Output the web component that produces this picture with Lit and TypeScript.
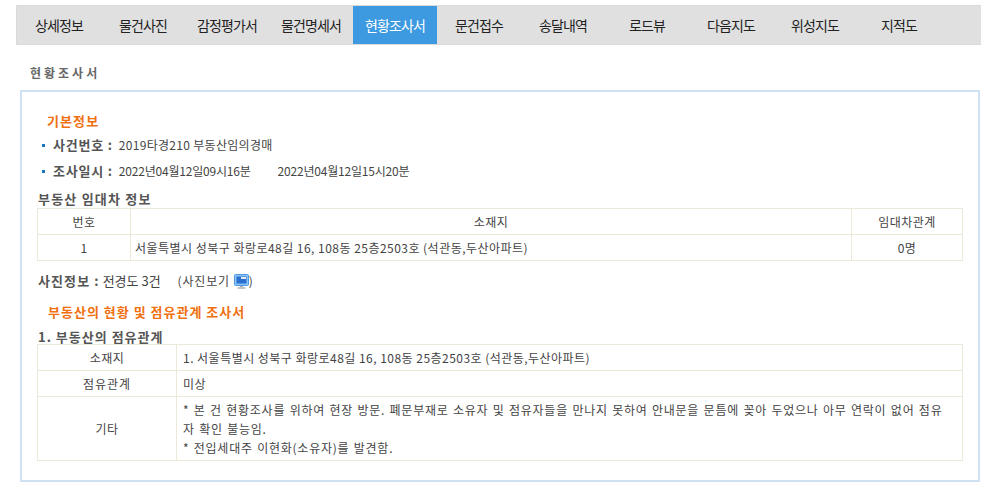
import { LitElement, html, css } from "lit";
import { customElement } from "lit/decorators.js";

const TABS = ["상세정보","물건사진","감정평가서","물건명세서","현황조사서","문건접수","송달내역","로드뷰","다음지도","위성지도","지적도"];
const ADDR = "서울특별시 성북구 화랑로48길 16, 108동 25층2503호 (석관동,두산아파트)";

@customElement("app-root")
export class AppRoot extends LitElement {
  static styles = css`
    :host { display: block; width: 981px; height: 491px; overflow: hidden; background: #fff; color: #333;
      font-family: "Noto Sans CJK KR", "Noto Sans", sans-serif; font-size: 12px; }
    * { box-sizing: border-box; }
    .page { padding: 5px 0 0 16px; }
    .nav { display: flex; height: 40px; background: #e0e0e0; border: 1px solid #dadada; border-right: 0; }
    .tab { width: 84px; height: 38px; display: flex; align-items: center; justify-content: center; font-size: 14px; letter-spacing: -0.9px; color: #222; }
    .tab.on { background: #3d9ae0; color: #fff; }
    .title { margin: 19px 0 0 14px; height: 17px; line-height: 17px; font-size: 12px; font-weight: 700; color: #666; letter-spacing: 3px; }
    .box { margin: 9px 1px 0 4px; height: 392px; border: 2px solid #cfe0f3; padding: 20px 15px 0 15px; }
    .h-or { color: #f07010; font-weight: 700; font-size: 13px; line-height: 18px; height: 18px; }
    .h1 { margin-left: 10px; letter-spacing: 1.1px; }
    .info { display: flex; align-items: center; height: 26px; color: #444; font-size: 12px; letter-spacing: -0.2px; margin-left: 5px; }
    .info1 { margin-top: 1px; letter-spacing: 0.3px; }
    .bul { width: 3px; height: 3px; background: #1a76c0; margin-right: 8px; margin-top: 2px; }
    .info b { color: #555; font-size: 13px; letter-spacing: 0.8px; margin-right: 6px; }
    .gap { margin-left: 27px; }
    .sub { color: #555; font-weight: 700; font-size: 13px; line-height: 14px; height: 14px; margin-left: 1px; }
    .s1 { margin-top: 9px; margin-bottom: 2px; letter-spacing: 1.2px; }
    table { border-collapse: collapse; table-layout: fixed; width: 925px; color: #444; font-size: 12px; letter-spacing: 0.47px; }
    td { border: 1px solid #ece9d8; text-align: center; height: 26px; padding: 0 5px; line-height: 25px; }
    td.l { text-align: left; padding-left: 4px; }
    td.m { padding-left: 6px; padding-right: 12px; }
    td.long { line-height: 19px; padding-top: 3px; padding-bottom: 3px; word-spacing: 1px; letter-spacing: 0.75px; }
    .wide { letter-spacing: 1px; }
    .photo { display: flex; align-items: center; height: 22px; margin-top: 8px; color: #444; font-size: 13px; }
    .photo b { color: #555; letter-spacing: 1.1px; margin-right: 3px; margin-left: 1px; }
    .ph2 { margin-left: 17px; font-size: 12px; display: flex; align-items: center; letter-spacing: 0.8px; }
    svg { display: block; margin: 2px 0 0 4px; }
    .h2 { margin: 12px 0 0 11px; letter-spacing: 1px; }
    .s2 { margin-top: 9px; letter-spacing: 1px; }
  `;
  render() {
    return html`<div class="page">
      <div class="nav">${TABS.map((t, i) => html`<div class="tab ${i === 4 ? "on" : ""}">${t}</div>`)}</div>
      <div class="title">현황조사서</div>
      <div class="box">
        <div class="h-or h1">기본정보</div>
        <div class="info info1"><span class="bul"></span><b>사건번호 :</b>2019타경210 부동산임의경매</div>
        <div class="info"><span class="bul"></span><b>조사일시 :</b>2022년04월12일09시16분<span class="gap">2022년04월12일15시20분</span></div>
        <div class="sub s1">부동산 임대차 정보</div>
        <table>
          <colgroup><col style="width:93px"><col style="width:721px"><col style="width:111px"></colgroup>
          <tr><td>번호</td><td>소재지</td><td>임대차관계</td></tr>
          <tr><td>1</td><td class="l">${ADDR}</td><td>0명</td></tr>
        </table>
        <div class="photo"><b>사진정보 :</b>전경도 3건<span class="ph2">(사진보기<svg width="15" height="15" viewBox="0 0 15 15"><rect x="0.5" y="0.5" width="14" height="11" rx="1" fill="#8cc2f4" stroke="#4f9ae6"/><rect x="2.5" y="2.5" width="10" height="7" fill="#2a6fd0"/><rect x="7" y="3" width="5" height="2" fill="#e4edf8"/><rect x="6" y="12" width="3" height="1" fill="#a8adb2"/><rect x="3.5" y="13" width="8" height="2" fill="#c2c5c9"/></svg>)</span></div>
        <div class="h-or h2">부동산의 현황 및 점유관계 조사서</div>
        <div class="sub s2">1. 부동산의 점유관계</div>
        <table>
          <colgroup><col style="width:139px"><col style="width:786px"></colgroup>
          <tr><td>소재지</td><td class="l m">1. ${ADDR}</td></tr>
          <tr><td class="wide">점유관계</td><td class="l m">미상</td></tr>
          <tr><td>기타</td><td class="l m long">* 본 건 현황조사를 위하여 현장 방문. 폐문부재로 소유자 및 점유자들을 만나지 못하여 안내문을 문틈에 꽂아 두었으나 아무 연락이 없어 점유자 확인 불능임.<br>* 전입세대주 이현화(소유자)를 발견함.</td></tr>
        </table>
      </div>
    </div>`;
  }
}
